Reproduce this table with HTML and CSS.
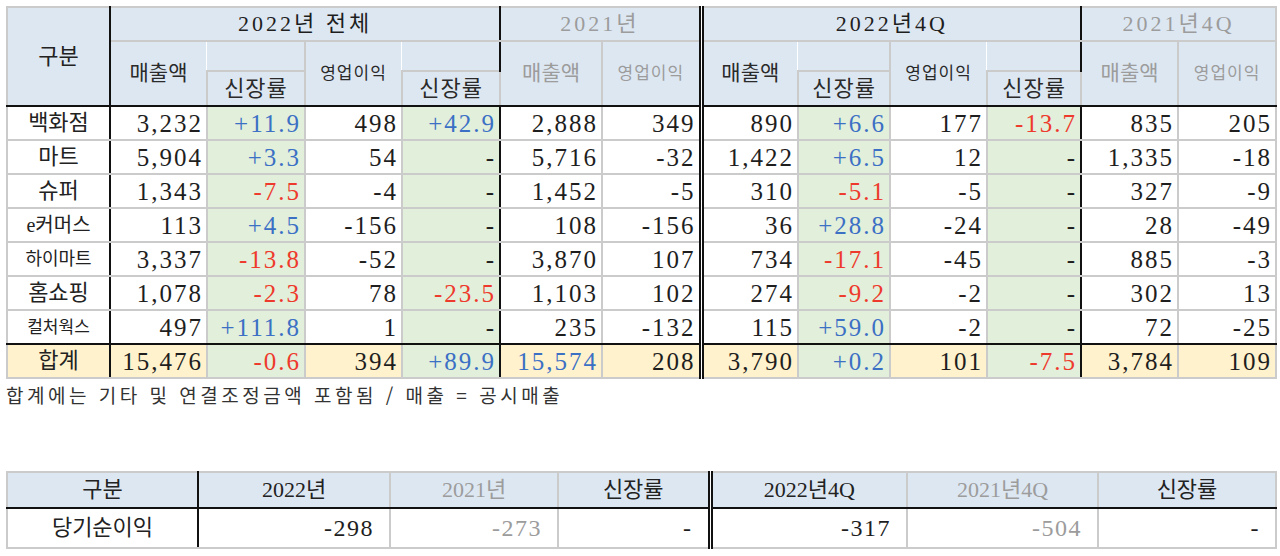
FILE: index.html
```html
<!DOCTYPE html>
<html lang="ko">
<head>
<meta charset="utf-8">
<title>유통 부문 실적</title>
<link rel="stylesheet" href="styles.css">
</head>
<body>
<div class="page">
<table class="grid main">
  <colgroup>
    <col class="w103"><col class="w97"><col class="w98"><col class="w97"><col class="w98"><col class="w102"><col class="w99">
    <col class="w97"><col class="w92"><col class="w97"><col class="w94"><col class="w97"><col class="w98">
  </colgroup>
  <thead>
    <tr class="h1">
      <th rowspan="3" class="lbl bk bb">구분</th>
      <th colspan="4" class="grp bk">2022년 전체</th>
      <th colspan="2" class="grp dim dbl">2021년</th>
      <th colspan="4" class="grp bk">2022년4Q</th>
      <th colspan="2" class="grp dim">2021년4Q</th>
    </tr>
    <tr class="h2">
      <th rowspan="2" class="sub nr bb">매출액</th>
      <th class="e"></th>
      <th rowspan="2" class="sub sm nr bb">영업이익</th>
      <th class="e bk"></th>
      <th rowspan="2" class="sub dim bb">매출액</th>
      <th rowspan="2" class="sub sm dim bb dbl">영업이익</th>
      <th rowspan="2" class="sub nr bb">매출액</th>
      <th class="e"></th>
      <th rowspan="2" class="sub sm nr bb">영업이익</th>
      <th class="e bk"></th>
      <th rowspan="2" class="sub dim bb">매출액</th>
      <th rowspan="2" class="sub sm dim bb">영업이익</th>
    </tr>
    <tr class="h3">
      <th class="rate bb">신장률</th>
      <th class="rate bb bk">신장률</th>
      <th class="rate bb">신장률</th>
      <th class="rate bb bk">신장률</th>
    </tr>
  </thead>
  <tbody>
    <tr>
      <th class="lbl">백화점</th>
      <td>3,232</td><td class="pos">+11.9</td><td>498</td><td class="pos">+42.9</td>
      <td>2,888</td><td>349</td>
      <td>890</td><td class="pos">+6.6</td><td>177</td><td class="neg">-13.7</td>
      <td>835</td><td>205</td>
    </tr>
    <tr>
      <th class="lbl">마트</th>
      <td>5,904</td><td class="pos">+3.3</td><td>54</td><td>-</td>
      <td>5,716</td><td>-32</td>
      <td>1,422</td><td class="pos">+6.5</td><td>12</td><td>-</td>
      <td>1,335</td><td>-18</td>
    </tr>
    <tr>
      <th class="lbl">슈퍼</th>
      <td>1,343</td><td class="neg">-7.5</td><td>-4</td><td>-</td>
      <td>1,452</td><td>-5</td>
      <td>310</td><td class="neg">-5.1</td><td>-5</td><td>-</td>
      <td>327</td><td>-9</td>
    </tr>
    <tr>
      <th class="lbl md">e커머스</th>
      <td>113</td><td class="pos">+4.5</td><td>-156</td><td>-</td>
      <td>108</td><td>-156</td>
      <td>36</td><td class="pos">+28.8</td><td>-24</td><td>-</td>
      <td>28</td><td>-49</td>
    </tr>
    <tr>
      <th class="lbl sm">하이마트</th>
      <td>3,337</td><td class="neg">-13.8</td><td>-52</td><td>-</td>
      <td>3,870</td><td>107</td>
      <td>734</td><td class="neg">-17.1</td><td>-45</td><td>-</td>
      <td>885</td><td>-3</td>
    </tr>
    <tr>
      <th class="lbl">홈쇼핑</th>
      <td>1,078</td><td class="neg">-2.3</td><td>78</td><td class="neg">-23.5</td>
      <td>1,103</td><td>102</td>
      <td>274</td><td class="neg">-9.2</td><td>-2</td><td>-</td>
      <td>302</td><td>13</td>
    </tr>
    <tr class="pre">
      <th class="lbl xs">컬처웍스</th>
      <td>497</td><td class="pos">+111.8</td><td>1</td><td>-</td>
      <td>235</td><td>-132</td>
      <td>115</td><td class="pos">+59.0</td><td>-2</td><td>-</td>
      <td>72</td><td>-25</td>
    </tr>
    <tr class="total">
      <th class="lbl">합계</th>
      <td>15,476</td><td class="neg">-0.6</td><td>394</td><td class="pos">+89.9</td>
      <td class="pos">15,574</td><td>208</td>
      <td>3,790</td><td class="pos">+0.2</td><td>101</td><td class="neg">-7.5</td>
      <td>3,784</td><td>109</td>
    </tr>
  </tbody>
</table>

<p class="note">합계에는 기타 및 연결조정금액 포함됨 / 매출 = 공시매출</p>

<table class="grid net">
  <colgroup>
    <col class="w191"><col class="w192"><col class="w168"><col class="w152"><col class="w197"><col class="w191"><col class="w178">
  </colgroup>
  <thead>
    <tr class="nh">
      <th class="bk">구분</th>
      <th>2022년</th>
      <th class="dim">2021년</th>
      <th class="dbl">신장률</th>
      <th>2022년4Q</th>
      <th class="dim">2021년4Q</th>
      <th>신장률</th>
    </tr>
  </thead>
  <tbody>
    <tr class="nd">
      <th class="lbl bk">당기순이익</th>
      <td>-298</td>
      <td class="dim">-273</td>
      <td class="dbl">-</td>
      <td>-317</td>
      <td class="dim">-504</td>
      <td>-</td>
    </tr>
  </tbody>
</table>
</div>
</body>
</html>
```
FILE: styles.css
```css
* { box-sizing: border-box; }

body {
  margin: 0;
  background: #ffffff;
  color: #1e1e1e;
  font-family: "Liberation Serif", "Noto Sans CJK KR", serif;
}

.page {
  padding: 6px 0 0 6px;
}

.grid {
  border-collapse: collapse;
  table-layout: fixed;
  width: 1269px;
}

.grid th,
.grid td {
  border: 2px solid #cbcbcb;
  padding: 0 3px 0 0;
  white-space: nowrap;
  overflow: hidden;
}

.grid td {
  text-align: right;
  font-size: 25px;
  letter-spacing: 2px;
  line-height: 1;
}

.grid th {
  font-weight: normal;
  text-align: center;
  padding: 0;
  line-height: 1;
}

/* column widths */
.w92 { width: 92px; }
.w94 { width: 94px; }
.w97 { width: 97px; }
.w98 { width: 98px; }
.w99 { width: 99px; }
.w102 { width: 102px; }
.w103 { width: 103px; }
.w152 { width: 152px; }
.w168 { width: 168px; }
.w178 { width: 178px; }
.w191 { width: 191px; }
.w192 { width: 192px; }
.w197 { width: 197px; }

/* borders */
.grid .bk { border-right: 2px solid #111; }
.grid .bb { border-bottom: 2px solid #111; }
.grid .dbl { border-right: 5px double #111; }
.grid .nr { border-right: none; }
.grid .e { border-left: none; border-bottom: none; }

/* header */
.main thead th { background: #dde7f2; }
.main .h1 { height: 34px; }
.main .h2 { height: 30px; }
.main .h3 { height: 35px; }

.grp {
  font-size: 22px;
  letter-spacing: 3px;
  color: #1e1e1e;
}

.sub {
  font-size: 21px;
  color: #2a2a2a;
}

.sub.sm { font-size: 17px; letter-spacing: 1px; }

.rate {
  font-size: 22px;
  letter-spacing: 1px;
  color: #2a2a2a;
}

.grid .dim { color: #9c9c9c; }

.lbl {
  font-size: 22px;
  color: #222;
}

.lbl.md { font-size: 20px; }
.lbl.sm { font-size: 18px; }
.lbl.xs { font-size: 17px; }

/* body */
.main tbody tr { height: 34px; }

.main tbody td:nth-child(3),
.main tbody td:nth-child(5),
.main tbody td:nth-child(9),
.main tbody td:nth-child(11) {
  background: #e2efda;
}

.main tbody > tr > :nth-child(1),
.main tbody > tr > :nth-child(5),
.main tbody > tr > :nth-child(11) {
  border-right: 2px solid #111;
}

.main tbody > tr > :nth-child(7) {
  border-right: 5px double #111;
}

.main tr.pre > * { border-bottom: 2px solid #111; }

.main tr.total > * { background: #fff2cc; }

.grid .pos { color: #3b70c5; }
.grid .neg { color: #ee3a2c; }

/* note */
.note {
  margin: 2px 0 0 0;
  font-family: "Noto Sans CJK KR", sans-serif;
  font-size: 19px;
  line-height: 28px;
  letter-spacing: 3.5px;
  color: #333;
}

/* net income table */
.net { margin-top: 62px; }

.net thead th {
  background: #dde7f2;
  font-size: 22px;
  color: #222;
  border-bottom: 2px solid #111;
}

.net .nh { height: 36px; }
.net .nd { height: 40px; }

.net td {
  padding-right: 15px;
  font-size: 24px;
  letter-spacing: 1.5px;
}
```
